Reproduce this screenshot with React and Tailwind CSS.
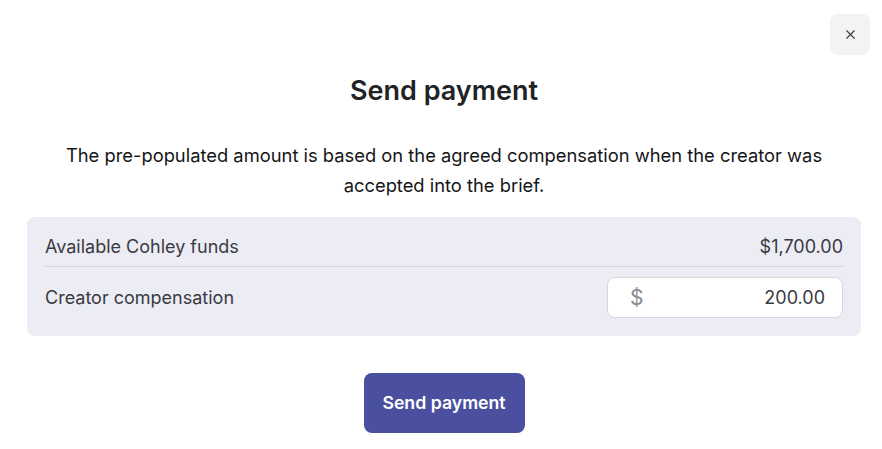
import React, { useState } from 'react';

function CloseIcon() {
  return (
    <svg width="15" height="15" viewBox="0 0 24 24" fill="none" stroke="currentColor" strokeWidth="1.8" strokeLinecap="round">
      <path d="M6 6l12 12M18 6L6 18" />
    </svg>
  );
}

export default function App() {
  const [amount, setAmount] = useState('200.00');

  return (
    <div
      className="relative w-[882px] h-[449px] bg-white text-[#222326] overflow-hidden"
      style={{ fontFamily: 'Inter, "Liberation Sans", sans-serif' }}
    >
      <button className="absolute top-[14px] right-[12px] w-[40px] h-[41px] rounded-lg bg-[#f3f3f4] flex items-center justify-center text-[#3a3a3d]">
        <CloseIcon />
      </button>

      <div className="flex flex-col items-center pt-[74px] pl-[27px] pr-[21px]">
        <h1 className="text-[27px] leading-[34px] font-semibold text-[#222326]">Send payment</h1>

        <p className="mt-[32px] text-[18.35px] leading-[30px] text-center text-[#161618] max-w-[800px]">
          The pre-populated amount is based on the agreed compensation when the creator was accepted into the brief.
        </p>

        <div className="mt-[17px] w-full bg-[#ececf5] rounded-lg px-[18px] pt-[10px] pb-[18px]">
          <div className="flex items-center justify-between h-[40px] border-b border-[#d4d4dc] text-[18px] text-[#3a3a3f]">
            <span>Available Cohley funds</span>
            <span>$1,700.00</span>
          </div>
          <div className="flex items-center justify-between mt-[10px] text-[18px] text-[#3a3a3f]">
            <span>Creator compensation</span>
            <div className="flex items-center w-[236px] h-[41px] bg-white border border-[#d6d6dc] rounded-lg pl-[22px] pr-[17px]">
              <span className="text-[21px] text-[#8a8a90]">$</span>
              <input
                value={amount}
                onChange={(e) => setAmount(e.target.value)}
                className="flex-1 min-w-0 text-right bg-transparent outline-none text-[18px] text-[#3a3a3f]"
              />
            </div>
          </div>
        </div>

        <button className="mt-[37px] w-[161px] h-[60px] rounded-lg bg-[#4a4f9f] text-white text-[17.7px] font-semibold">
          Send payment
        </button>
      </div>
    </div>
  );
}
